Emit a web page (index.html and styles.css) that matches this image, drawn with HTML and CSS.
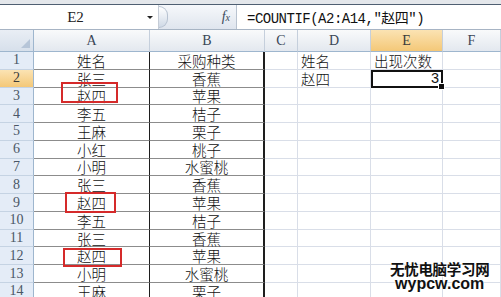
FILE: index.html
```html
<!DOCTYPE html>
<html lang="zh-CN">
<head>
    <meta charset="UTF-8">
    <title>COUNTIF</title>
    <link rel="stylesheet" href="styles.css">
</head>
<body>
    <div class="app">
        <div class="top-band"></div>

        <!-- Formula bar -->
        <div class="formula-bar">
            <div class="name-box">
                <span class="name">E2</span>
                <span class="arrow"></span>
            </div>
            <div class="fx-zone">
                <span class="knob"></span>
                <span class="fx">f<i>x</i></span>
            </div>
            <div class="formula">=COUNTIF(A2:A14,"赵四")</div>
        </div>

        <!-- Sheet grid, filled by the script below -->
        <div class="sheet" id="sheet"></div>

        <div class="watermark">
            <div class="wm-cn">无忧电脑学习网</div>
            <div class="wm-en">wypcw.com</div>
        </div>
    </div>

    <script>
        const cols = ['A', 'B', 'C', 'D', 'E', 'F'];
        const data = [
            ['姓名', '采购种类', '', '姓名', '出现次数'],
            ['张三', '香蕉', '', '赵四', '3'],
            ['赵四', '苹果'],
            ['李五', '桔子'],
            ['王麻', '栗子'],
            ['小红', '桃子'],
            ['小明', '水蜜桃'],
            ['张三', '香蕉'],
            ['赵四', '苹果'],
            ['李五', '桔子'],
            ['张三', '香蕉'],
            ['赵四', '苹果'],
            ['小明', '水蜜桃'],
            ['王麻', '栗子']
        ];
        const marked = [3, 9, 12];

        const sheet = document.getElementById('sheet');
        let html = '<div class="corner"><span class="tri"></span></div>';
        cols.forEach(c => {
            html += `<div class="col-head${c === 'E' ? ' active' : ''}">${c}</div>`;
        });

        data.forEach((row, i) => {
            const r = i + 1;
            html += `<div class="row-head${r === 2 ? ' active' : ''}">${r}</div>`;
            cols.forEach((c, j) => {
                let text = row[j] || '';
                let cls = 'cell col-' + c.toLowerCase();
                if (c === 'E' && r === 2) cls += ' selected num';
                if (c === 'A' && marked.includes(r)) {
                    text = `<span class="mark mark-${r}"></span>` + text;
                }
                html += `<div class="${cls}">${text ? '<span class="txt">' + text + '</span>' : ''}</div>`;
            });
        });
        sheet.innerHTML = html;
    </script>
</body>
</html>
```

FILE: styles.css
```css
body {
    margin: 0;
    padding: 0;
    background-color: #fff;
    font-family: "Liberation Serif", "Noto Sans CJK SC", serif;
}

.app {
    position: relative;
    width: 501px;
    height: 297px;
    overflow: hidden;
}

.top-band {
    height: 4px;
    background-color: #e4e7eb;
    border-bottom: 1px solid #4f5f72;
}

/* Formula bar */
.formula-bar {
    display: flex;
    height: 24px;
    border-bottom: 1px solid #a7b4c4;
    background-color: #fff;
}

.name-box {
    width: 158px;
    display: flex;
    align-items: center;
    border-right: 1px solid #c5ccd6;
}

.name {
    flex: 1;
    text-align: center;
    font-size: 15px;
    color: #222;
    padding-left: 4px;
}

.arrow {
    width: 0;
    height: 0;
    margin-right: 5px;
    border-left: 3px solid transparent;
    border-right: 3px solid transparent;
    border-top: 3px solid #222;
}

.fx-zone {
    width: 77px;
    display: flex;
    align-items: center;
    justify-content: space-between;
    background: linear-gradient(#f6f8fb, #dfe5ee);
    border-right: 1px solid #b9c3d0;
}

.knob {
    width: 8px;
    height: 20px;
    border-radius: 0 10px 10px 0;
    border: 1px solid #b7c2d1;
    border-left: none;
    background: linear-gradient(#ffffff, #cfd9e6);
}

.fx {
    font-family: "Liberation Serif", serif;
    font-style: italic;
    font-size: 14px;
    color: #39485a;
    margin-right: 6px;
}

.fx i {
    font-size: 10px;
}

.formula {
    flex: 1;
    display: flex;
    align-items: center;
    padding-left: 10px;
    font-family: "Liberation Mono", "Noto Sans CJK SC", monospace;
    font-size: 14px;
    letter-spacing: -0.5px;
    color: #111;
}

/* Sheet */
.sheet {
    display: grid;
    grid-template-columns: 34px 116px 115px 33px 73px 72px 1fr;
    grid-template-rows: 22px repeat(14, 17.77px);
    font-size: 15px;
    color: #111;
}

.corner {
    position: relative;
    background: linear-gradient(#e9eef5, #d7e0eb);
    border-right: 1px solid #9eb6ce;
    border-bottom: 1px solid #9eb6ce;
}

.tri {
    position: absolute;
    right: 3px;
    bottom: 3px;
    width: 0;
    height: 0;
    border-left: 9px solid transparent;
    border-bottom: 9px solid #b6c5d8;
}

.col-head {
    display: flex;
    align-items: center;
    justify-content: center;
    background: linear-gradient(#f9fafb, #e3e8ef);
    border-right: 1px solid #c5cfdc;
    border-bottom: 1px solid #9eb6ce;
    color: #3a4656;
    font-size: 14px;
}

.row-head {
    display: flex;
    align-items: center;
    justify-content: center;
    background-color: #e4ecf7;
    border-right: 1px solid #9eb6ce;
    border-bottom: 1px solid #c5d3e3;
    color: #4a5766;
    font-size: 14px;
    line-height: 1;
}

.col-head.active,
.row-head.active {
    background: linear-gradient(#fbe3b3, #f4c878);
    color: #3a3a3a;
}

.cell {
    position: relative;
    display: flex;
    align-items: center;
    padding: 0 3px;
    white-space: nowrap;
    border-right: 1px solid #d9dee8;
    border-bottom: 1px solid #d9dee8;
    font-family: "Noto Sans CJK SC", "Liberation Serif", sans-serif;
    font-weight: 300;
    font-size: 14.5px;
}

.txt {
    display: block;
    height: 15px;
    line-height: 15px;
}

.col-a,
.col-b {
    justify-content: center;
    border-bottom-color: #8c8c8c;
}

.col-a {
    border-right-color: #1e1e1e;
}

.col-b {
    border-right: 2px solid #1e1e1e;
}

.num {
    justify-content: flex-end;
    font-family: "Liberation Sans", sans-serif;
}

/* Selected cell E2 */
.selected {
    outline: 2px solid #111;
    outline-offset: -2px;
}

.selected::after {
    content: "";
    position: absolute;
    right: -3px;
    bottom: -3px;
    width: 5px;
    height: 5px;
    background-color: #111;
    border: 1px solid #fff;
    z-index: 2;
}

/* Red boxes drawn over the A column */
.mark {
    position: absolute;
    border: 2px solid #d52a2a;
    z-index: 2;
}

.mark-3 {
    left: 27px;
    top: -6px;
    width: 53px;
    height: 17px;
}

.mark-9 {
    left: 31px;
    top: -2px;
    width: 47px;
    height: 17px;
}

.mark-12 {
    left: 29px;
    top: 1px;
    width: 55px;
    height: 15px;
}

/* Watermark */
.watermark {
    position: absolute;
    left: 390px;
    top: 261px;
    text-align: center;
    color: #111;
    text-shadow: 0 0 2px #fff, 0 0 2px #fff;
}

.wm-cn {
    font-family: "Noto Sans CJK SC", sans-serif;
    font-weight: 700;
    font-size: 14.5px;
    line-height: 15px;
    letter-spacing: -0.3px;
}

.wm-en {
    font-family: "Liberation Sans", sans-serif;
    font-weight: 700;
    font-size: 16px;
    line-height: 15px;
}
```
